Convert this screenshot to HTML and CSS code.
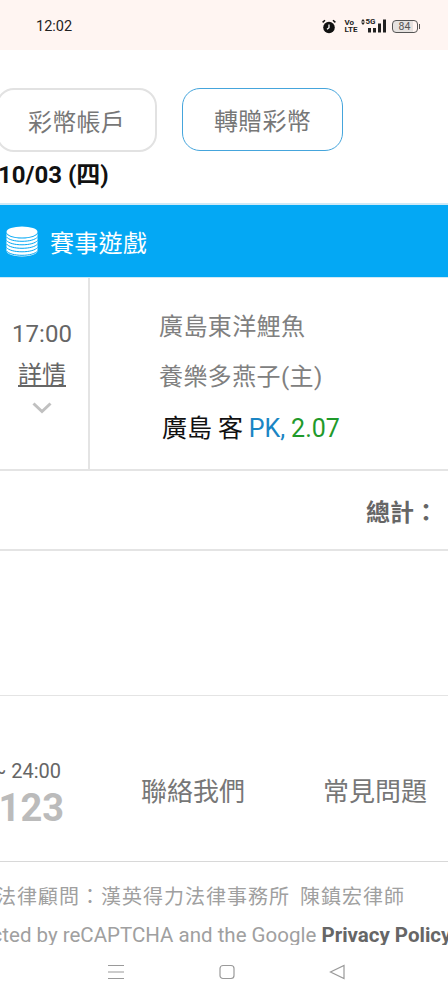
FILE: index.html
```html
<!DOCTYPE html>
<html lang="zh-Hant">
<head>
  <meta charset="UTF-8">
  <meta name="viewport" content="width=device-width, initial-scale=1.0">
  <title>賽事遊戲</title>
  <link rel="stylesheet" href="styles.css">
</head>
<body>
<div class="status-bar">
  <span class="clock">12:02</span>
  <div class="status-icons">
    <svg class="alarm" width="14" height="15" viewBox="0 0 14 15">
      <circle cx="7" cy="8.500" r="5.800" fill="#111"/>
      <path d="M7 5.500v3.200l-2 1.600" stroke="#fff" stroke-width="1.300" fill="none"/>
      <path d="M.6 3.400 3 1.200M13.400 3.400 11 1.200" stroke="#111" stroke-width="1.500"/>
    </svg>
    <span class="volte">Vo<br>LTE</span>
    <div class="signal">
      <svg class="net-arrows" width="4" height="6" viewBox="0 0 4 6">
        <path d="M2 0 4 2.400H0zM2 6 0 3.600h4z" fill="#222"/>
      </svg>
      <span class="net">5G</span>
      <svg class="bars" width="18" height="14" viewBox="0 0 18 14">
        <path d="M0 9h3v4.500H0zM5 9h3v4.500H5zM10 4.500h3v9h-3zM15 .5h3v13h-3z" fill="#222"/>
      </svg>
    </div>
    <div class="battery"><span class="battery-level">84</span></div>
    <div class="battery-nub"></div>
  </div>
</div>

<div class="viewport">
  <div class="page">
    <div class="tabs">
      <div class="tab">彩幣帳戶</div>
      <div class="tab active">轉贈彩幣</div>
    </div>
    <div class="date">10/03 (四)</div>

    <div class="game-bar">
      <svg class="coins" width="32" height="31" viewBox="0 0 32 31">
        <ellipse cx="16" cy="6" rx="15.500" ry="5.500" fill="#fff"/>
        <path d="M.5 7v18c0 3 7 5.500 15.500 5.500S31.500 28 31.500 25V7c0 3-7 5.500-15.500 5.500S.5 10 .5 7z" fill="#fff"/>
        <g fill="none" stroke="#04a8f4" stroke-width="1">
          <path d="M.5 11c2 2.600 8 4.300 15.500 4.300S29.500 13.600 31.500 11"/>
          <path d="M.5 14.500c2 2.600 8 4.300 15.500 4.300s13.500-1.700 15.500-4.300"/>
          <path d="M.5 18c2 2.600 8 4.300 15.500 4.300S29.500 20.600 31.500 18"/>
          <path d="M.5 21.500c2 2.600 8 4.300 15.500 4.300s13.500-1.700 15.500-4.300"/>
          <path d="M.5 25c2 2.600 8 4.300 15.500 4.300S29.500 27.600 31.500 25"/>
        </g>
      </svg>
      <span>賽事遊戲</span>
    </div>

    <div class="match">
      <div class="match-time">
        <div class="time">17:00</div>
        <div class="details">詳情</div>
        <svg class="chevron" width="20" height="12" viewBox="0 0 20 12">
          <path d="M1.500 1.500 10 9.500l8.500-8" fill="none" stroke="#c0c0c0" stroke-width="3"/>
        </svg>
      </div>
      <div class="match-info">
        <div class="team">廣島東洋鯉魚</div>
        <div class="team">養樂多燕子(主)</div>
        <div class="bet">廣島 客 <span class="bet-type">PK,</span> <span class="bet-odds">2.07</span></div>
      </div>
    </div>

    <div class="total">總計：</div>
    <div class="spacer"></div>

    <div class="contact">
      <div class="hours">
        <div class="hours-time">~ 24:00</div>
        <div class="hours-phone">0123</div>
      </div>
      <div class="contact-link first">聯絡我們</div>
      <div class="contact-link">常見問題</div>
    </div>

    <div class="legal">
      <div class="counsel">法律顧問：漢英得力法律事務所 陳鎮宏律師</div>
      <div class="captcha">This site is protected by reCAPTCHA and the Google <b>Privacy Policy</b></div>
    </div>
  </div>
</div>

<div class="nav-bar">
  <svg width="18" height="16" viewBox="0 0 18 16">
    <path d="M1 1.500h16M1 8h16M1 14.500h16" stroke="#9a9a9a" stroke-width="1.200"/>
  </svg>
  <svg width="16" height="16" viewBox="0 0 16 16">
    <rect x="1" y="1.500" width="14" height="13" rx="3" fill="none" stroke="#9a9a9a" stroke-width="1.200"/>
  </svg>
  <svg width="16" height="16" viewBox="0 0 16 16">
    <path d="M15 1.500v13L1.500 8z" fill="none" stroke="#9a9a9a" stroke-width="1.200"/>
  </svg>
</div>
</body>
</html>
```

FILE: styles.css
```css
body {
    margin: 0;
    width: 448px;
    height: 1000px;
    overflow: hidden;
    background: white;
    font-family: Roboto, "Noto Sans CJK TC", sans-serif;
}
.status-bar {
    height: 50px;
    background: #fff5f2;
    display: flex;
    justify-content: space-between;
    align-items: center;
    padding: 2px 28px 0 36px;
    box-sizing: border-box;
}
.clock {
    font-size: 14.500px;
    color: #222;
}
.status-icons {
    display: flex;
    align-items: center;
}
.alarm {
    margin-right: 9px;
}
.volte {
    width: 9px;
    font-size: 8px;
    line-height: 7px;
    font-weight: bold;
    color: #222;
    text-align: center;
    white-space: nowrap;
    margin-right: 7px;
}
.signal {
    position: relative;
    width: 25px;
    height: 14px;
    margin-right: 6px;
}
.bars {
    position: absolute;
    right: 0;
    top: 0;
}
.net-arrows {
    position: absolute;
    left: 0;
    top: 0;
}
.net {
    position: absolute;
    left: 5px;
    top: 0;
    font-size: 8px;
    line-height: 6px;
    font-weight: bold;
    color: #222;
}
.battery {
    width: 26px;
    height: 13px;
    border: 1px solid #555;
    border-radius: 4px;
    display: flex;
    align-items: center;
    justify-content: center;
    box-sizing: border-box;
    background: linear-gradient(to right, #e6e2e0 84%, transparent 84%);
}
.battery-level {
    font-size: 10.500px;
    color: #555;
}
.battery-nub {
    width: 1.500px;
    height: 5px;
    margin-left: 1px;
    background: #555;
}
.viewport {
    height: 895px;
    overflow: hidden;
}
.page {
    width: 800px;
    margin-left: -100px;
}
.tabs {
    display: flex;
    gap: 25px;
    padding: 38px 0 0 96px;
}
.tab {
    width: 161px;
    height: 64px;
    border: 2px solid #e2e2e2;
    border-radius: 18px;
    box-sizing: border-box;
    display: flex;
    align-items: center;
    justify-content: center;
    font-size: 24px;
    color: #777;
    letter-spacing: 0.3px;
}
.tab.active {
    border: 1px solid #45a5dc;
    height: 63px;
}
.date {
    padding-left: 98px;
    font-size: 24px;
    font-weight: bold;
    line-height: 28px;
    margin-top: 9px;
    color: #111;
}
.game-bar {
    margin-top: 14px;
    height: 75px;
    box-sizing: border-box;
    border-top: 2px solid #cfe9f6;
    border-bottom: 1px solid #cfe9f6;
    background: #04a8f4;
    display: flex;
    align-items: center;
    color: white;
    font-size: 24px;
    letter-spacing: 0.3px;
    padding-left: 106px;
}
.coins {
    margin-right: 12px;
}
.match {
    display: flex;
    height: 193px;
    border-bottom: 2px solid #e4e4e4;
    box-sizing: border-box;
}
.match-time {
    width: 188px;
    border-right: 2px solid #e4e4e4;
    display: flex;
    flex-direction: column;
    align-items: flex-end;
    padding-top: 40px;
    color: #666;
}
.time {
    font-size: 24px;
    line-height: 32px;
    width: 60px;
    margin-right: 16px;
    text-align: center;
}
.details {
    font-size: 24px;
    line-height: 32px;
    margin: 9px 22px 0 0;
    text-decoration: underline;
}
.chevron {
    margin: 11px 36px 0 0;
}
.match-info {
    padding: 31px 0 0 69px;
}
.team {
    font-size: 24px;
    line-height: 36px;
    height: 50px;
    color: #808080;
    letter-spacing: 0.4px;
}
.bet {
    font-size: 25px;
    line-height: 36px;
    color: #111;
    padding-left: 3px;
    margin-top: 2px;
    word-spacing: -0.3px;
}
.bet-type {
    color: #1a85c4;
}
.bet-odds {
    color: #1f9a2b;
}
.total {
    height: 80px;
    box-sizing: border-box;
    border-bottom: 2px solid #e4e4e4;
    padding: 24px 0 0 466px;
    font-size: 24px;
    line-height: 36px;
    font-weight: bold;
    color: #666;
}
.spacer {
    height: 144px;
    border-bottom: 1px solid #e4e4e4;
}
.contact {
    display: flex;
    height: 166px;
    box-sizing: border-box;
    border-bottom: 1px solid #d8d8d8;
    padding-top: 62px;
}
.hours {
    width: 161px;
    text-align: right;
}
.hours-time {
    font-size: 20px;
    line-height: 26px;
    color: #666;
}
.hours-phone {
    font-size: 38px;
    line-height: 48px;
    font-weight: bold;
    color: #bbb;
    margin-right: -3px;
}
.contact-link {
    font-size: 26px;
    line-height: 40px;
    color: #777;
    margin: 14px 0 0 78px;
}
.contact-link.first {
    margin-left: 80px;
}
.legal {
    padding-top: 20px;
}
.counsel {
    font-size: 20px;
    line-height: 30px;
    color: #a0a0a0;
    padding-left: 96px;
    letter-spacing: 1px;
    word-spacing: 4px;
    white-space: nowrap;
}
.captcha {
    font-size: 20.500px;
    line-height: 30px;
    color: #a0a0a0;
    margin-top: 8px;
    margin-left: -59px;
    white-space: nowrap;
}
.captcha b {
    color: #666;
}
.nav-bar {
    height: 55px;
    background: white;
    display: flex;
    align-items: flex-start;
    justify-content: space-between;
    padding: 19px 103px 0 107px;
    box-sizing: border-box;
}
```
